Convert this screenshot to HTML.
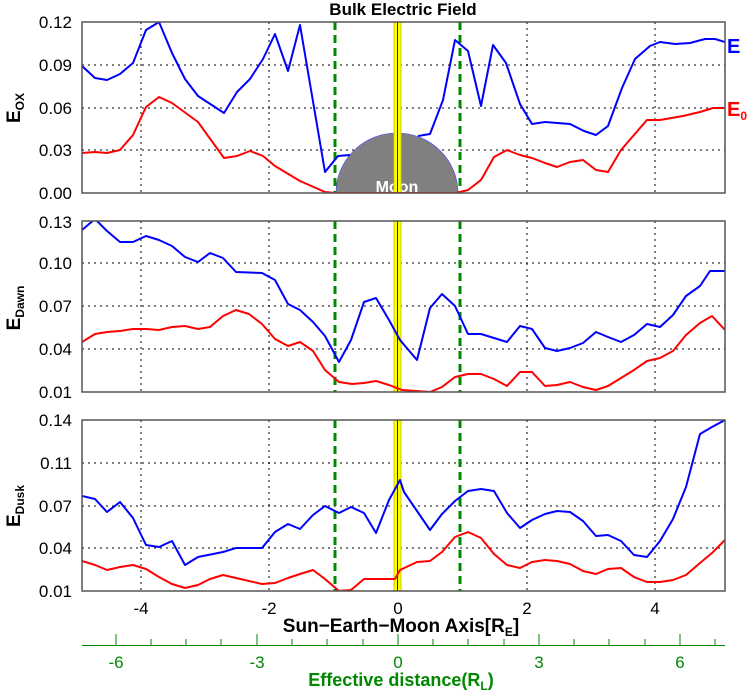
<!DOCTYPE html><html><head><style>body{margin:0;background:#fff}svg{display:block}text{font-family:"Liberation Sans",sans-serif}.d{font-family:"DejaVu Sans",sans-serif}</style></head><body>
<svg width="747" height="691" xmlns="http://www.w3.org/2000/svg">
<defs><clipPath id="c1"><rect x="82" y="22" width="643" height="171"/></clipPath><clipPath id="c2"><rect x="82" y="221" width="643" height="171"/></clipPath><clipPath id="c3"><rect x="82" y="420" width="643" height="171"/></clipPath></defs>
<text x="403" y="15" text-anchor="middle" font-size="17" font-weight="bold">Bulk Electric Field</text>
<g stroke="#000" stroke-width="1" stroke-dasharray="2,4" fill="none">
<path d="M141 22V193M269 22V193M527 22V193M655 22V193M82 65H725M82 108H725M82 150H725"/>
<path d="M141 221V392M269 221V392M527 221V392M655 221V392M82 263H725M82 306H725M82 349H725"/>
<path d="M141 420V591M269 420V591M527 420V591M655 420V591M82 463H725M82 506H725M82 548H725"/>
</g>
<ellipse cx="397" cy="193" rx="61" ry="60" fill="#808080" stroke="#44f" stroke-width="0.6" clip-path="url(#c1)"/>
<text x="397" y="192" text-anchor="middle" font-size="16" font-weight="bold" fill="#fff">Moon</text>
<g fill="#ff0" stroke="#cc0" stroke-width="1"><rect x="394" y="22" width="7" height="171"/><rect x="394" y="221" width="7" height="171"/><rect x="394" y="420" width="7" height="171"/></g>
<g stroke="#000" stroke-width="0.8"><path d="M397.5 22V193M397.5 221V392M397.5 420V591"/></g>
<g stroke="#080" stroke-width="3" stroke-dasharray="8,5"><path d="M335 22V193M460 22V193M335 221V392M460 221V392M335 420V591M460 420V591"/></g>
<g fill="none" stroke-width="2" stroke-linejoin="round">
<polyline clip-path="url(#c1)" stroke="#f00" points="82,153 95,152 107,153 120,150 133,135 146,107 159,97 172,103 198,122 224,158 237,156 250,151 263,156 275,166 300,181 325,192 335,193 456,193 468,190 481,180 494,157 507,150 520,155 532,158 545,163 557,167 570,162 583,160 596,170 608,172 621,150 634,135 647,120 660,120 683,116 700,112 713,108 725,108"/>
<polyline clip-path="url(#c1)" stroke="#00f" points="82,66 95,78 107,80 120,74 133,63 146,30 159,22 172,53 185,79 198,96 224,113 237,92 250,79 263,59 275,34 288,71 300,25 325,172 338,156 350,155"/>
<polyline clip-path="url(#c1)" stroke="#00f" points="418,136 430,134 443,100 455,40 468,51 481,106 493,45 506,63 520,104 532,124 545,122 570,124 584,131 596,135 608,126 622,88 635,59 650,46 660,42 675,44 690,43 705,39 715,39 725,42"/>
<polyline clip-path="url(#c2)" stroke="#f00" points="82,342 95,334 107,332 120,331 133,329 146,329 159,330 172,327 185,326 198,329 210,327 223,316 236,310 249,314 262,324 275,339 288,346 300,342 313,351 325,370 339,382 352,384 364,383 376,381 389,385 402,390 430,392 442,387 455,377 468,374 481,374 494,379 507,386 520,372 532,372 545,386 557,385 570,382 583,387 596,390 608,386 621,378 634,370 647,361 660,358 673,351 686,335 700,323 712,316 725,330"/>
<polyline clip-path="url(#c2)" stroke="#00f" points="82,230 95,219 107,231 120,242 133,242 146,236 159,240 172,246 185,257 198,262 210,253 223,258 236,272 262,273 275,280 288,304 300,310 313,322 325,336 339,362 351,340 364,302 376,298 389,320 400,340 417,360 430,308 442,294 455,306 468,334 481,334 494,338 507,342 520,326 532,329 545,348 557,351 570,348 583,343 596,332 608,337 621,342 634,335 647,324 660,327 673,315 686,296 700,286 710,271 725,271"/>
<polyline clip-path="url(#c3)" stroke="#f00" points="82,561 95,565 107,570 120,567 133,565 146,569 159,577 172,584 185,588 198,585 210,579 223,575 236,578 262,584 275,583 288,578 300,574 313,570 325,579 339,591 351,590 364,579 389,579 395,579 400,570 417,562 430,561 442,552 455,537 468,532 481,538 494,554 507,565 520,568 532,562 545,560 557,561 570,564 583,571 596,574 608,569 621,568 634,577 647,582 660,582 673,580 686,575 700,563 712,553 725,540"/>
<polyline clip-path="url(#c3)" stroke="#00f" points="82,496 95,499 107,512 120,502 133,518 146,545 159,547 172,541 185,565 198,557 223,552 236,548 262,548 275,532 288,524 300,529 313,515 325,506 339,513 351,507 364,513 376,533 389,500 400,480 404,492 417,511 430,530 442,514 455,501 468,491 481,489 494,491 507,513 520,528 532,520 545,514 557,511 570,512 583,521 596,536 608,535 621,541 634,555 647,557 660,541 673,519 686,487 700,434 712,427 725,420"/>
</g>
<g fill="none" stroke="#555" stroke-width="1.5"><rect x="82" y="22" width="643" height="171"/><rect x="82" y="221" width="643" height="171"/><rect x="82" y="420" width="643" height="171"/></g>
<g class="d" font-size="17" text-anchor="end">
<text x="72" y="28">0.12</text><text x="72" y="71">0.09</text><text x="72" y="114">0.06</text><text x="72" y="156">0.03</text><text x="72" y="199">0.00</text>
<text x="72" y="228">0.13</text><text x="72" y="269">0.10</text><text x="72" y="312">0.07</text><text x="72" y="355">0.04</text><text x="72" y="398">0.01</text>
<text x="72" y="426">0.14</text><text x="72" y="469">0.11</text><text x="72" y="512">0.07</text><text x="72" y="554">0.04</text><text x="72" y="597">0.01</text>
</g>
<g class="d" font-size="17" text-anchor="middle"><text x="141" y="614">-4</text><text x="269" y="614">-2</text><text x="398" y="614">0</text><text x="527" y="614">2</text><text x="655" y="614">4</text></g>
<text x="401" y="632" text-anchor="middle" font-size="19" font-weight="bold">Sun−Earth−Moon Axis[R<tspan font-size="12" dy="4">E</tspan><tspan dy="-4">]</tspan></text>
<g font-weight="bold" font-size="19">
<text transform="translate(20,108) rotate(-90)" text-anchor="middle">E<tspan font-size="12" dy="4">OX</tspan></text>
<text transform="translate(20,308) rotate(-90)" text-anchor="middle">E<tspan font-size="12" dy="4">Dawn</tspan></text>
<text transform="translate(20,506) rotate(-90)" text-anchor="middle">E<tspan font-size="12" dy="4">Dusk</tspan></text>
</g>
<text x="727" y="53" font-size="20" font-weight="bold" fill="#00f">E</text>
<text x="727" y="116" font-size="20" font-weight="bold" fill="#f00">E<tspan font-size="12" dy="4">0</tspan></text>
<g stroke="#080" stroke-width="1"><path d="M82 645.5H725"/>
<path d="M116 634V645M257 634V645M398 634V645M539 634V645M680 634V645M151 639V645M186 639V645M221 639V645M292 639V645M327 639V645M363 639V645M433 639V645M468 639V645M504 639V645M574 639V645M609 639V645M645 639V645M715 639V645"/></g>
<g class="d" font-size="17" fill="#080" text-anchor="middle"><text x="116" y="668">-6</text><text x="257" y="668">-3</text><text x="398" y="668">0</text><text x="539" y="668">3</text><text x="680" y="668">6</text></g>
<text x="401" y="686" text-anchor="middle" font-size="18" font-weight="bold" fill="#080">Effective distance(R<tspan font-size="12" dy="4">L</tspan><tspan dy="-4">)</tspan></text>
</svg></body></html>
